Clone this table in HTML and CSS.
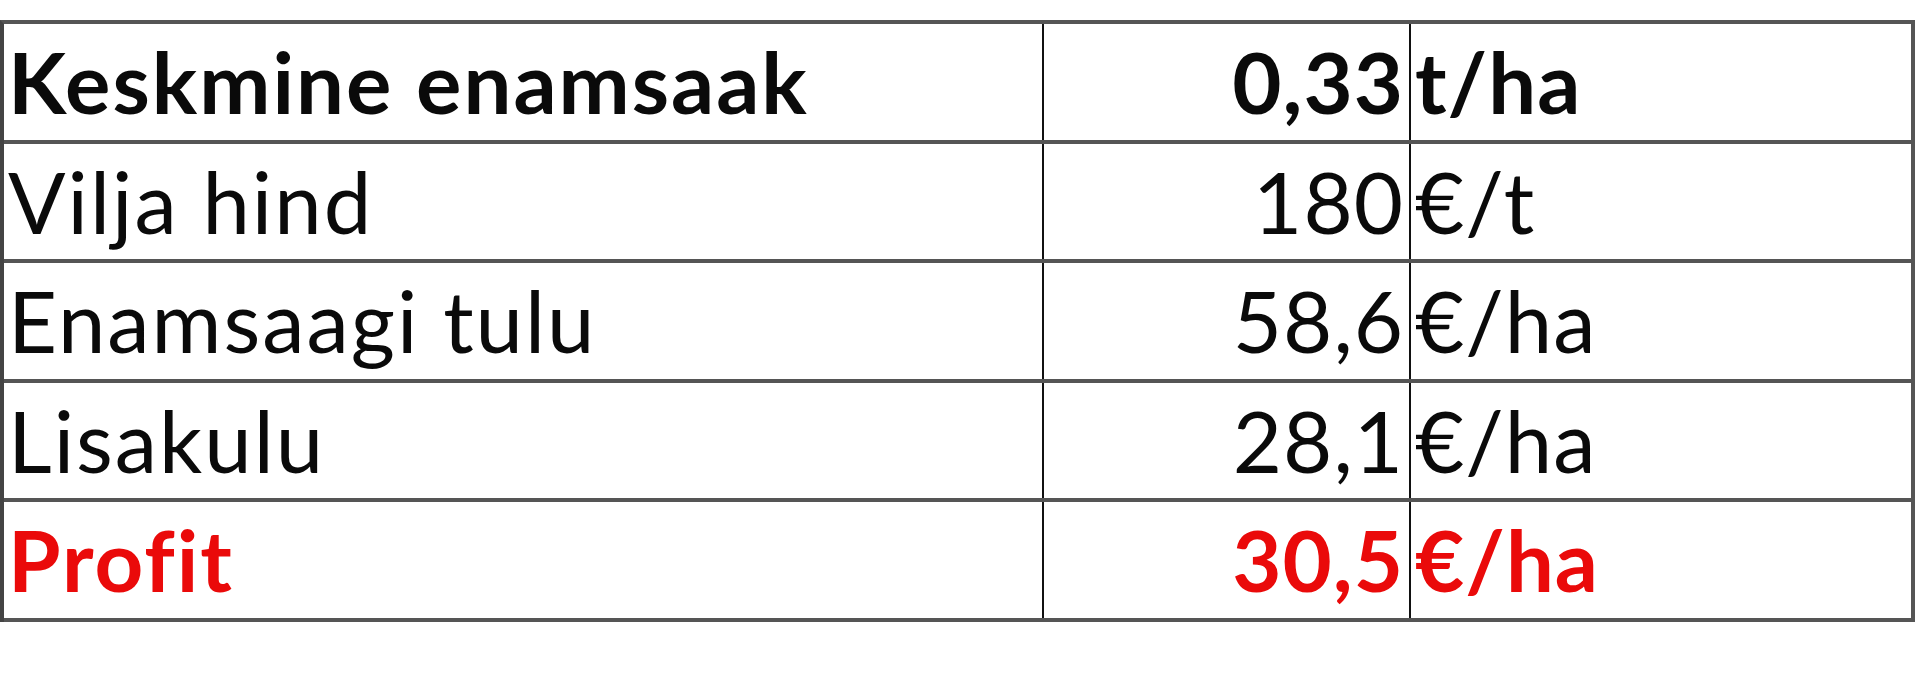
FILE: index.html
```html
<!DOCTYPE html>
<html lang="et">
<head>
<meta charset="utf-8">
<title>Enamsaak</title>
<link rel="stylesheet" href="styles.css">
</head>
<body>
<div class="sheet">
  <div class="row bold">
    <div class="cell label">Keskmine enamsaak</div>
    <div class="cell value">0,33</div>
    <div class="cell unit">t/ha</div>
  </div>
  <div class="row">
    <div class="cell label">Vilja hind</div>
    <div class="cell value">180</div>
    <div class="cell unit">€/t</div>
  </div>
  <div class="row">
    <div class="cell label">Enamsaagi tulu</div>
    <div class="cell value">58,6</div>
    <div class="cell unit">€/ha</div>
  </div>
  <div class="row">
    <div class="cell label">Lisakulu</div>
    <div class="cell value">28,1</div>
    <div class="cell unit">€/ha</div>
  </div>
  <div class="row bold red">
    <div class="cell label">Profit</div>
    <div class="cell value">30,5</div>
    <div class="cell unit">€/ha</div>
  </div>
</div>
</body>
</html>
```
FILE: styles.css
```css
html, body {
  margin: 0;
  padding: 0;
  background: #ffffff;
}

body {
  font-family: Lato, "Liberation Sans", sans-serif;
  color: #0a0a0a;
  font-variant-ligatures: none;
}

.sheet {
  margin-top: 20px;
  width: 1915px;
  box-sizing: border-box;
  border-top: 4px solid #555555;
  border-left: 4px solid #444444;
  border-right: 4px solid #555555;
}

.row {
  display: grid;
  grid-template-columns: 1040px 367px 500px;
  height: 119.6px;
  box-sizing: border-box;
  border-bottom: 4px solid #555555;
}

.cell {
  box-sizing: border-box;
  font-size: 85px;
  line-height: 1.2;
  padding-top: 6px;
  white-space: nowrap;
  letter-spacing: 2px;
}

.label {
  padding-left: 4px;
  border-right: 2px solid #111111;
}

.value {
  text-align: right;
  padding-right: 5px;
  letter-spacing: 1px;
  border-right: 2px solid #111111;
}

.unit {
  padding-left: 4px;
  letter-spacing: 1px;
}

.bold .cell {
  font-weight: 700;
}

.red .cell {
  color: #ea0a0a;
}
```
